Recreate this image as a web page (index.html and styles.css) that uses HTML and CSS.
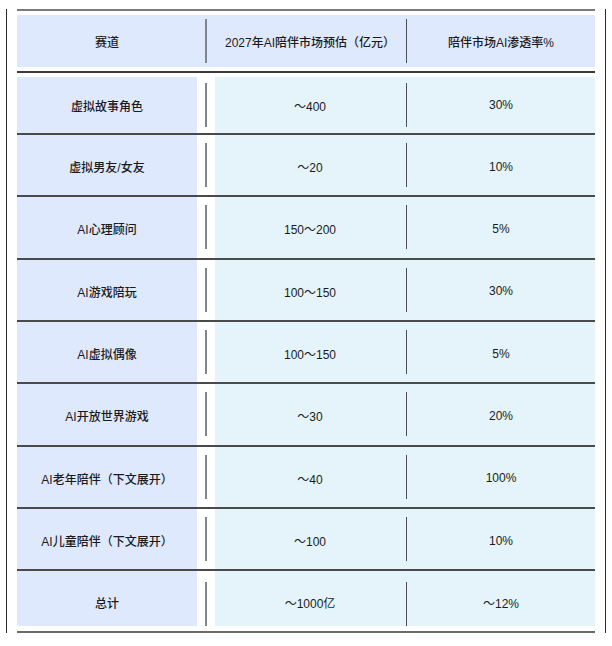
FILE: index.html
```html
<!DOCTYPE html>
<html lang="zh-CN">
<head>
<meta charset="utf-8">
<link rel="stylesheet" href="styles.css">
</head>
<body>
<div class="frame">
  <div class="table">
    <div class="head">
      <div class="cell">赛道</div>
      <div class="gutter"><span class="bar"></span></div>
      <div class="cell">2027年AI陪伴市场预估（亿元）</div>
      <div class="gutter"><span class="bar dark"></span></div>
      <div class="cell">陪伴市场AI渗透率%</div>
    </div>
    <div class="body">
      <div class="row first">
        <div class="cell label">虚拟故事角色</div>
        <div class="gutter"><span class="bar"></span></div>
        <div class="cell val">～400</div>
        <div class="gutter val-bg"><span class="bar dark"></span></div>
        <div class="cell val">30%</div>
      </div>
      <div class="row">
        <div class="cell label">虚拟男友/女友</div>
        <div class="gutter"><span class="bar"></span></div>
        <div class="cell val">～20</div>
        <div class="gutter val-bg"><span class="bar dark"></span></div>
        <div class="cell val">10%</div>
      </div>
      <div class="row">
        <div class="cell label">AI心理顾问</div>
        <div class="gutter"><span class="bar"></span></div>
        <div class="cell val">150～200</div>
        <div class="gutter val-bg"><span class="bar dark"></span></div>
        <div class="cell val">5%</div>
      </div>
      <div class="row">
        <div class="cell label">AI游戏陪玩</div>
        <div class="gutter"><span class="bar"></span></div>
        <div class="cell val">100～150</div>
        <div class="gutter val-bg"><span class="bar dark"></span></div>
        <div class="cell val">30%</div>
      </div>
      <div class="row">
        <div class="cell label">AI虚拟偶像</div>
        <div class="gutter"><span class="bar"></span></div>
        <div class="cell val">100～150</div>
        <div class="gutter val-bg"><span class="bar dark"></span></div>
        <div class="cell val">5%</div>
      </div>
      <div class="row">
        <div class="cell label">AI开放世界游戏</div>
        <div class="gutter"><span class="bar"></span></div>
        <div class="cell val">～30</div>
        <div class="gutter val-bg"><span class="bar dark"></span></div>
        <div class="cell val">20%</div>
      </div>
      <div class="row">
        <div class="cell label">AI老年陪伴（下文展开）</div>
        <div class="gutter"><span class="bar"></span></div>
        <div class="cell val">～40</div>
        <div class="gutter val-bg"><span class="bar dark"></span></div>
        <div class="cell val">100%</div>
      </div>
      <div class="row">
        <div class="cell label">AI儿童陪伴（下文展开）</div>
        <div class="gutter"><span class="bar"></span></div>
        <div class="cell val">～100</div>
        <div class="gutter val-bg"><span class="bar dark"></span></div>
        <div class="cell val">10%</div>
      </div>
      <div class="row last">
        <div class="cell label">总计</div>
        <div class="gutter"><span class="bar"></span></div>
        <div class="cell val">～1000亿</div>
        <div class="gutter val-bg"><span class="bar dark"></span></div>
        <div class="cell val">～12%</div>
      </div>
    </div>
  </div>
</div>
</body>
</html>
```

FILE: styles.css
```css
* { box-sizing: border-box; }
html, body { margin: 0; padding: 0; background: #ffffff; }
body {
  font-family: "Liberation Sans", Arial, "Noto Sans CJK SC", sans-serif;
  font-size: 12px;
  color: #1b1b1b;
}
.frame {
  margin: 9px 0 0 6px;
  width: 600px;
  height: 624px;
  border-left: 1px solid #2a2a2a;
  border-right: 1px solid #2a2a2a;
  padding: 0 10px;
}
.table {
  border-top: 2px solid #7a7a7a;
  border-bottom: 2px solid #6a6a6a;
}
.head, .row {
  display: grid;
  grid-template-columns: 180px 18px 190px 2px 188px;
}
.head {
  margin: 4px 0;
  height: 52px;
  background: #dfe9fd;
}
.body {
  border-top: 2px solid #3a3a3a;
  padding: 4px 0 5px;
}
.row {
  height: 62.33px;
  border-bottom: 2px solid #4a4a4a;
}
.row .cell { padding-top: 3px; }
.row.first { height: 58px; }
.row.first .cell { padding-top: 0; }
.row.last { height: 54.67px; border-bottom: none; }
.row.last .cell { padding-top: 8px; }
.row.last .gutter { align-items: flex-end; }
.cell {
  display: flex;
  align-items: center;
  justify-content: center;
  text-align: center;
  white-space: nowrap;
}
.head .cell { font-weight: 500; }
.label {
  background: #dfe9fd;
  font-weight: 500;
}
.val { background: #e4f4fa; }
.val-bg { background: #e4f4fa; }
.gutter {
  display: flex;
  align-items: center;
  justify-content: center;
}
.bar {
  display: block;
  width: 2px;
  height: 44px;
  background: #80848b;
}
.bar.dark { background: #4a4f57; width: 1px; }
```
